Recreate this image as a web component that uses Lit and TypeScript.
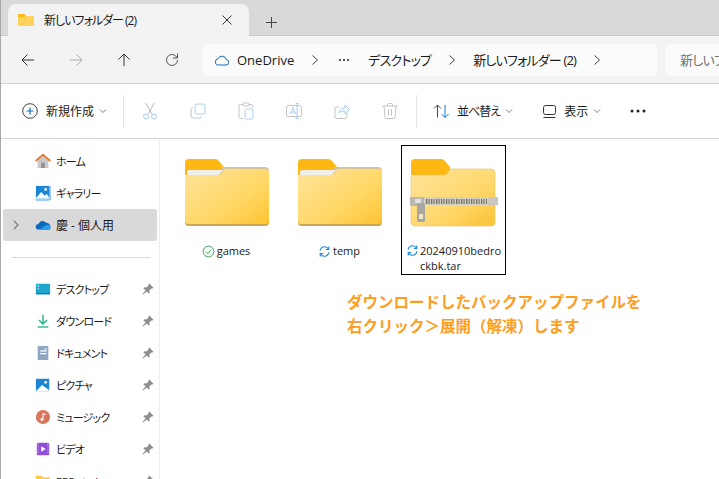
import { LitElement, html, css, svg } from 'lit';
import { customElement } from 'lit/decorators.js';

const folder = (id: string) => html`
  <svg class="folder" viewBox="0 0 84 68" width="84" height="68">
    <defs>
      <linearGradient id=${id} x1="0" y1="0" x2="1" y2="1">
        <stop offset="0" stop-color="#ffe49c" />
        <stop offset="0.6" stop-color="#ffd765" />
        <stop offset="1" stop-color="#ffc32e" />
      </linearGradient>
    </defs>
    <path d="M0 4a4 4 0 0 1 4-4h26a6 6 0 0 1 4 2l5 6v8h-39z" fill="#fdb813" />
    <path d="M36 8h44a4 4 0 0 1 4 4v4h-48z" fill="#d6c39a" />
    <path d="M2 13a2 2 0 0 1 2-2h34l-4 5h-32z" fill="#eeeeea" />
    <path d="M0 19a3 3 0 0 1 3-3h29c3 0 5-1 7-6h41a4 4 0 0 1 4 4v50a4 4 0 0 1-4 3h-76a4 4 0 0 1-4-3z" fill="url(#${id})" />
    <path d="M0 63a4 4 0 0 0 4 4h76a4 4 0 0 0 4-4v-1a3 3 0 0 1-3 3h-78a3 3 0 0 1-3-3z" fill="#cca654" />
  </svg>`;

const zipFolder = () => html`
  <svg class="folder zip" viewBox="0 0 84 68" width="84" height="68">
    <defs>
      <linearGradient id="zipgrad" x1="0" y1="0" x2="1" y2="1">
        <stop offset="0" stop-color="#ffe49a" />
        <stop offset="0.55" stop-color="#ffd970" />
        <stop offset="1" stop-color="#fcc334" />
      </linearGradient>
      <pattern id="teeth" width="2.500" height="5" patternUnits="userSpaceOnUse">
        <rect width="2.500" height="5" fill="#d8d4c8" />
        <rect width="1.200" height="5" fill="#6f6a5e" />
      </pattern>
    </defs>
    <path d="M0 4a4 4 0 0 1 4-4h26a6 6 0 0 1 4 2l5 6v8h-39z" fill="#fdb813" />
    <path d="M0 19a3 3 0 0 1 3-3h29c3 0 5-1 7-6h41a4 4 0 0 1 4 4v50a4 4 0 0 1-4 3h-76a4 4 0 0 1-4-3z" fill="url(#zipgrad)" stroke="#e8c26a" stroke-width="0.6" />
    <rect x="-1" y="38" width="88" height="8" fill="#d3d0c6" />
    <rect x="14" y="40" width="62" height="5" fill="url(#teeth)" />
    <rect x="-1" y="38" width="14" height="9" rx="1" fill="#b8b6b0" />
    <rect x="4" y="40" width="6" height="4" fill="#e4e4e0" />
    <rect x="77" y="38" width="10" height="8" fill="#c9c7bf" />
    <rect x="6" y="44" width="8" height="19" rx="1.500" fill="#a9a79f" />
    <rect x="8" y="55" width="4" height="5" fill="#efe6c8" />
  </svg>`;

const syncIcon = svg`<path d="M2.200 6.200A4.800 4.800 0 0 1 10.400 3.400L11.400 4.600M11.600 1.600v3.200h-3.200" fill="none" stroke="#1e88dc" stroke-width="1.200"/><path d="M11.800 7.800A4.800 4.800 0 0 1 3.600 10.600L2.600 9.400M2.400 12.400V9.200h3.200" fill="none" stroke="#1e88dc" stroke-width="1.200"/>`;

const pin = html`<svg class="pin" viewBox="0 0 12 12" width="12" height="12">
  <path d="M7.200 .5l4.300 4.300-1 .8-1-.2-2.100 2.100.2 2.100-.9.9-2.100-2.100L1 11.500.5 11l3-3.700-2.100-2.100.9-.9 2.100.2 2.100-2.100-.2-1z" fill="#8d8d8d" />
</svg>`;

const navIcons: Record<string, unknown> = {
  home: svg`<path d="M3 8v9h12V8L9 2.500z" fill="#c9c9c9"/><rect x="7" y="11" width="4" height="6" fill="#8f8f8f"/><path d="M.8 9L9 1.800 17.200 9" fill="none" stroke="#e8772a" stroke-width="2"/>`,
  gallery: svg`<rect x="3" y="1" width="15" height="16" rx="1" fill="#9cc6e8"/><rect x="1" y="1" width="15" height="16" fill="#1a86d4"/><rect x="1" y="14" width="15" height="4" fill="#9fd0f2"/><path d="M1 15l6-7 4 4 2-2 3 4v1H1z" fill="#fff"/><circle cx="12" cy="5" r="1.600" fill="#fff"/>`,
  cloud: svg`<path d="M2.500 14h11a3.500 3.500 0 0 0 3-5.500 4 4 0 0 0-4-2A5 5 0 0 0 4 7.500 3.500 3.500 0 0 0 2.500 14z" fill="#0f6cbd"/><path d="M2.500 14.500h13c2.500 0 3-4 .7-5-3-1-5 0-7 2l-5 3z" fill="#2a9fe8"/>`,
  desktop: svg`<rect x="1" y="3" width="16" height="12" rx="1" fill="#1ea6cf"/><rect x="1" y="13.500" width="16" height="1.500" fill="#0f7ea6"/><rect x="3" y="5" width="1.500" height="1.500" fill="#e6f7fb"/><rect x="3" y="8" width="1.500" height="1.500" fill="#bfeaf4"/>`,
  download: svg`<path d="M9 2v10M4.500 8L9 12.500 13.500 8" fill="none" stroke="#21b58e" stroke-width="1.600"/><rect x="3" y="15" width="12" height="1.500" fill="#21b58e"/>`,
  doc: svg`<rect x="3" y="1" width="12" height="16" rx="1" fill="#8fa6c2"/><rect x="6" y="6" width="7" height="1.400" fill="#fff"/><rect x="6" y="9" width="7" height="1.400" fill="#fff"/><rect x="11" y="3.500" width="2" height="2" fill="#d6dfe9"/>`,
  picture: svg`<rect x="1" y="2" width="15" height="14" fill="#1a86d4"/><path d="M1 16l7-7 8 6v1z" fill="#fff"/><circle cx="12" cy="6" r="1.500" fill="#fff"/>`,
  music: svg`<circle cx="9" cy="9" r="8" fill="#d8765f"/><path d="M9 5v6.500" stroke="#fff" stroke-width="1.200"/><path d="M9 5l3 1.200" stroke="#fff" stroke-width="1.200"/><circle cx="7.800" cy="11.800" r="1.600" fill="#fff"/>`,
  video: svg`<rect x="2" y="2" width="14" height="14" rx="1.500" fill="#8f4fd6"/><path d="M7 6v6l5-3z" fill="#fff"/><path d="M3 3.500h1M3 6.500h1M3 9.500h1M3 12.500h1M14 3.500h1M14 6.500h1M14 9.500h1M14 12.500h1" stroke="#e2ccf7" stroke-width="1.200"/>`,
  folder: svg`<path d="M1 4a1 1 0 0 1 1-1h5l2 2h7a1 1 0 0 1 1 1v9H1z" fill="#ffc83d"/>`,
};

const side = [
  { icon: 'home', label: 'ホーム', kana: true },
  { icon: 'gallery', label: 'ギャラリー', kana: true },
  { icon: 'cloud', label: '慶 - 個人用', active: true },
];
const pinned = [
  { icon: 'desktop', label: 'デスクトップ' },
  { icon: 'download', label: 'ダウンロード' },
  { icon: 'doc', label: 'ドキュメント' },
  { icon: 'picture', label: 'ピクチャ' },
  { icon: 'music', label: 'ミュージック' },
  { icon: 'video', label: 'ビデオ' },
  { icon: 'folder', label: 'REC_stock' },
];

@customElement('app-root')
export class AppRoot extends LitElement {
  static styles = css`
    :host {
      display: block;
      width: 719px;
      height: 479px;
      overflow: hidden;
      position: relative;
      background: #fff;
      color: #1a1a1a;
      font-family: 'Open Sans', 'Noto Sans CJK JP', sans-serif;
      font-feature-settings: 'palt';
      font-size: 12px;
      box-sizing: border-box;
      border-left: 1px solid #a8a8a8;
    }
    svg { display: block; flex: none; }

    .tabs {
      height: 36px;
      background: #d9d9d9;
      border-bottom: 1px solid #c8c8c8;
      box-sizing: border-box;
      display: flex;
      align-items: flex-end;
      padding-left: 7px;
    }
    .tab {
      width: 241px;
      height: 32px;
      margin-bottom: -1px;
      background: #f3f3f3;
      border-radius: 8px 8px 0 0;
      display: flex;
      align-items: center;
      padding: 0 17px 0 10px;
      box-sizing: border-box;
    }
    .tab-title { margin-left: 10px; flex: 1; white-space: nowrap; letter-spacing: -1px; }
    .plus { margin-left: 17px; margin-bottom: 7px; }

    .nav {
      height: 48px;
      background: #f3f3f3;
      border-bottom: 1px solid #d5d5d5;
      box-sizing: border-box;
      display: flex;
      align-items: center;
      padding-left: 19px;
    }
    .nav-btn { width: 48px; flex: none; }
    .nav-btn.last { width: 32px; }
    .address {
      width: 455px;
      height: 32px;
      margin-left: 6px;
      background: #fbfbfb;
      border-radius: 5px;
      display: flex;
      align-items: center;
      padding-left: 12px;
      flex: none;
      box-sizing: border-box;
      font-size: 13px;
    }
    .cloud-mark { margin-right: 8px; }
    .crumb { white-space: nowrap; }
    .crumb.jp { letter-spacing: -0.8px; }
    .chev { margin: 0 17px; }
    .dots { margin-right: 18px; margin-left: 2px; }
    .search {
      margin-left: 8px;
      height: 32px;
      flex: 1;
      min-width: 0;
      background: #fbfbfb;
      border-radius: 5px 0 0 5px;
      padding-left: 15px;
      display: flex;
      align-items: center;
      color: #707070;
      white-space: nowrap;
      overflow: hidden;
      font-size: 13px;
      letter-spacing: -0.8px;
    }

    .toolbar {
      height: 55px;
      background: #fff;
      border-bottom: 1px solid #d5d5d5;
      box-sizing: border-box;
      display: flex;
      align-items: center;
      padding-left: 21px;
    }
    .tool { display: flex; align-items: center; flex: none; }
    .tool span { margin-left: 8px; }
    .tool span.tight { letter-spacing: -1px; margin-left: 7px; }
    .caret { margin-left: 5px; }
    .sep { width: 1px; height: 32px; background: #e5e5e5; flex: none; }
    .sep-new { margin-left: 16px; margin-right: 2px; }
    .sep-sort { margin-left: 2px; }
    .ghost { width: 48px; display: flex; justify-content: center; flex: none; }
    .tool-sort { margin-left: 16px; }
    .tool-view { margin-left: 30px; }
    .more { margin-left: 29px; }

    .main { display: flex; height: 340px; }
    .sidebar {
      width: 159px;
      flex: none;
      border-right: 1px solid #ededed;
      padding: 6px 2px 0 2px;
      overflow: hidden;
      box-sizing: border-box;
    }
    .row {
      height: 32px;
      width: 154px;
      display: flex;
      align-items: center;
      border-radius: 3px;
      box-sizing: border-box;
      padding-left: 32px;
      position: relative;
    }
    .row.active { background: #d9d9d9; }
    .row svg.icon { margin-right: 5px; }
    .row .label { flex: 1; white-space: nowrap; }
    .row .label.kana { font-size: 11px; letter-spacing: -0.8px; }
    .row .pin { margin-right: 3px; }
    .expander { position: absolute; left: 10px; top: 11px; }
    .divider { height: 1px; background: #d9d9d9; margin: 16px 8px 15px 9px; width: 138px; }

    .files { flex: 1; display: flex; gap: 8px; padding: 6px 0 0 15px; align-items: flex-start; }
    .item {
      width: 105px;
      height: 130px;
      box-sizing: border-box;
      display: flex;
      flex-direction: column;
      align-items: center;
      padding-top: 13px;
      border: 1px solid transparent;
    }
    .item.selected { border-color: #000; }
    .folder { margin-right: 1px; }
    .folder.zip { overflow: visible; }
    .name {
      margin-top: 16px;
      padding-right: 3px;
      display: flex;
      align-items: center;
      gap: 2px;
      font-size: 11px;
      line-height: 16px;
      white-space: nowrap;
    }
    .wrap {
      align-items: flex-start;
      width: 100%;
      box-sizing: border-box;
      padding-left: 4px;
      margin-top: 16px;
      font-size: 11px;
      line-height: 15px;
      display: flex;
      gap: 1px;
    }
    .wrap svg { margin-top: 1px; }

    .note {
      position: absolute;
      left: 346px;
      top: 289px;
      color: #ff9d1e;
      font-family: 'Noto Sans CJK JP', sans-serif;
      font-feature-settings: normal;
      font-weight: 700;
      font-size: 15.5px;
      line-height: 24px;
      white-space: nowrap;
    }
  `;

  private arrow(d: string, color: string) {
    return html`<div class="nav-btn"><svg viewBox="0 0 16 16" width="16" height="16"><path d=${d} fill="none" stroke=${color} stroke-width="1"/></svg></div>`;
  }

  private chevron(color = '#444') {
    return html`<svg class="chev" viewBox="0 0 8 10" width="8" height="10"><path d="M1.500 .5l5 4.500-5 4.500" fill="none" stroke=${color} stroke-width="1"/></svg>`;
  }

  private caret() {
    return html`<svg class="caret" viewBox="0 0 8 6" width="8" height="6"><path d="M1 1.500l3 3 3-3" fill="none" stroke="#808080" stroke-width="1"/></svg>`;
  }

  render() {
    return html`
      <div class="tabs">
        <div class="tab">
          <svg viewBox="0 0 16 14" width="16" height="14"><path d="M0 2a1 1 0 0 1 1-1h5l2 2h7a1 1 0 0 1 1 1v8a1 1 0 0 1-1 1H1a1 1 0 0 1-1-1z" fill="#ffd35c"/><path d="M0 2a1 1 0 0 1 1-1h5l2 2-2 1H0z" fill="#fdb813"/></svg>
          <div class="tab-title">新しいフォルダー (2)</div>
          <svg viewBox="0 0 10 10" width="10" height="10"><path d="M.5 .5l9 9M9.500 .5l-9 9" stroke="#333" stroke-width="1"/></svg>
        </div>
        <svg class="plus" viewBox="0 0 11 11" width="11" height="11"><path d="M5.500 0v11M0 5.500h11" stroke="#444" stroke-width="1"/></svg>
      </div>

      <div class="nav">
        ${this.arrow('M14 8H2M7.500 2.500L2 8l5.500 5.500', '#333')}
        ${this.arrow('M2 8h12M8.500 2.500L14 8l-5.500 5.500', '#a8a8a8')}
        ${this.arrow('M8 14V2M2.500 7.500L8 2l5.500 5.500', '#333')}
        <div class="nav-btn last"><svg viewBox="0 0 16 16" width="16" height="16"><path d="M13.500 8a5.500 5.500 0 1 1-1.600-3.900L13.500 6M13.500 1.500V6H9" fill="none" stroke="#555" stroke-width="1"/></svg></div>
        <div class="address">
          <svg class="cloud-mark" viewBox="0 0 15 12" width="15" height="12"><path d="M3.500 11h8.500a2.600 2.600 0 0 0 .5-5.200 4.500 4.500 0 0 0-8.500-1A3.200 3.200 0 0 0 3.500 11z" fill="none" stroke="#0f6cbd" stroke-width="1"/></svg>
          <span class="crumb">OneDrive</span>
          ${this.chevron()}
          <svg class="dots" viewBox="0 0 12 4" width="12" height="4"><circle cx="2" cy="2" r="1" fill="#222"/><circle cx="6" cy="2" r="1" fill="#222"/><circle cx="10" cy="2" r="1" fill="#222"/></svg>
          <span class="crumb jp">デスクトップ</span>
          ${this.chevron()}
          <span class="crumb jp">新しいフォルダー (2)</span>
          ${this.chevron()}
        </div>
        <div class="search">新しいフォルダー (2)の検索</div>
      </div>

      <div class="toolbar">
        <div class="tool">
          <svg viewBox="0 0 16 16" width="16" height="16"><circle cx="8" cy="8" r="7.300" fill="none" stroke="#444" stroke-width="1"/><path d="M8 4.500v7M4.500 8h7" stroke="#0f6cbd" stroke-width="1.200"/></svg>
          <span>新規作成</span>${this.caret()}
        </div>
        <div class="sep sep-new"></div>
        <div class="ghost"><svg viewBox="0 0 16 18" width="16" height="18"><path d="M3.500 1l6.500 11M12.500 1L6 12" stroke="#b9b9b9" fill="none"/><circle cx="4" cy="14.500" r="2.500" fill="none" stroke="#a9cdee"/><circle cx="12" cy="14.500" r="2.500" fill="none" stroke="#a9cdee"/></svg></div>
        <div class="ghost"><svg viewBox="0 0 16 16" width="16" height="16"><rect x="5" y="1" width="10" height="10" rx="2" fill="none" stroke="#a9cdee"/><path d="M3 4.500a2 2 0 0 0-2 2V13a2 2 0 0 0 2 2h6.500a2 2 0 0 0 2-1.500" fill="none" stroke="#c4c4c4"/></svg></div>
        <div class="ghost"><svg viewBox="0 0 16 18" width="16" height="18"><path d="M5 2.500H2.500a1.500 1.500 0 0 0-1.500 1.500v11.500a1.500 1.500 0 0 0 1.500 1H5M11 2.500h2.500a1.500 1.500 0 0 1 1 1V6" fill="none" stroke="#c4c4c4"/><rect x="5" y="1" width="6" height="3" rx="1" fill="none" stroke="#c4c4c4"/><rect x="7" y="7" width="8" height="10" rx="1.500" fill="none" stroke="#a9cdee"/></svg></div>
        <div class="ghost"><svg viewBox="0 0 16 16" width="16" height="16"><rect x=".5" y="2.500" width="15" height="11" rx="2" fill="none" stroke="#c4c4c4"/><path d="M4 11l3-6.500L9.500 11M5 9h4" fill="none" stroke="#a9cdee"/><path d="M11 .5v15M9.500 .5h3M9.500 15.500h3" fill="none" stroke="#a9cdee"/></svg></div>
        <div class="ghost"><svg viewBox="0 0 16 16" width="16" height="16"><path d="M13 10v3.500a2 2 0 0 1-2 2H3a2 2 0 0 1-2-2V6a2 2 0 0 1 2-2h2" fill="none" stroke="#c4c4c4"/><path d="M5 10c0-3 3-5 6-5V2l4.500 4.500L11 11V8c-3 0-4 .5-6 2z" fill="none" stroke="#a9cdee"/></svg></div>
        <div class="ghost"><svg viewBox="0 0 16 16" width="16" height="16"><path d="M.5 3h15M5.500 3V1.500a1 1 0 0 1 1-1h3a1 1 0 0 1 1 1V3M2 3l1 11.500a1 1 0 0 0 1 1h8a1 1 0 0 0 1-1L14 3M6.500 6v6.500M9.500 6v6.500" fill="none" stroke="#c4c4c4"/></svg></div>
        <div class="sep sep-sort"></div>
        <div class="tool tool-sort">
          <svg viewBox="0 0 17 14" width="17" height="14"><path d="M4.500 13.500V1M1 4.500L4.500 1 8 4.500" fill="none" stroke="#444"/><path d="M12 1v12.500M8.500 10l3.500 3.500 3.500-3.500" fill="none" stroke="#0f7ad6"/></svg>
          <span class="tight">並べ替え</span>${this.caret()}
        </div>
        <div class="tool tool-view">
          <svg viewBox="0 0 13 13" width="13" height="13"><rect x=".5" y=".5" width="12" height="9" rx="2" fill="none" stroke="#333"/><path d="M.5 12.500h12" stroke="#333"/></svg>
          <span>表示</span>${this.caret()}
        </div>
        <svg class="more" viewBox="0 0 16 4" width="16" height="4"><circle cx="2" cy="2" r="1.500" fill="#222"/><circle cx="8" cy="2" r="1.500" fill="#222"/><circle cx="14" cy="2" r="1.500" fill="#222"/></svg>
      </div>

      <div class="main">
        <div class="sidebar">
          ${side.map(
            (r) => html`<div class="row ${r.active ? 'active' : ''}">
              ${r.active
                ? html`<svg class="expander" viewBox="0 0 6 10" width="6" height="10"><path d="M1 1l4 4-4 4" fill="none" stroke="#7a7a7a" stroke-width="1.200"/></svg>`
                : ''}
              <svg class="icon" viewBox="0 0 18 18" width="16" height="16">${navIcons[r.icon]}</svg>
              <span class="label ${r.kana ? 'kana' : ''}">${r.label}</span>
            </div>`,
          )}
          <div class="divider"></div>
          ${pinned.map(
            (r) => html`<div class="row">
              <svg class="icon" viewBox="0 0 18 18" width="16" height="16">${navIcons[r.icon]}</svg>
              <span class="label kana">${r.label}</span>
              ${pin}
            </div>`,
          )}
        </div>
        <div class="files">
          <div class="item">
            ${folder('f1')}
            <div class="name">
              <svg viewBox="0 0 14 14" width="13" height="13"><circle cx="7" cy="7" r="5.800" fill="none" stroke="#2f9a4c" stroke-width="1"/><path d="M4.200 7.200l2 2 3.600-4" fill="none" stroke="#2f9a4c" stroke-width="1"/></svg>
              games
            </div>
          </div>
          <div class="item">
            ${folder('f2')}
            <div class="name"><svg viewBox="0 0 14 14" width="13" height="13">${syncIcon}</svg>temp</div>
          </div>
          <div class="item selected">
            ${zipFolder()}
            <div class="wrap"><svg viewBox="0 0 14 14" width="13" height="13">${syncIcon}</svg><div>20240910bedro<br />ckbk.tar</div></div>
          </div>
        </div>
      </div>

      <div class="note">ダウンロードしたバックアップファイルを<br />右クリック＞展開（解凍）します</div>
    `;
  }
}
